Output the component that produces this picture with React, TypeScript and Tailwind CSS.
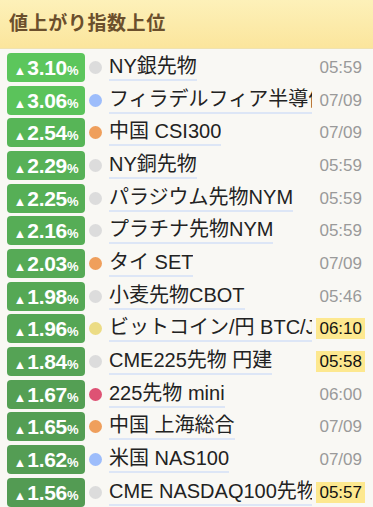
import React from 'react';

type Row = { pct: string; bg: string; dot: string; name: string; time: string; hot?: boolean };

const rows: Row[] = [
  { pct: '3.10', bg: 'bg-[#5cc65c]', dot: 'bg-[#dcdcdc]', name: 'NY銀先物', time: '05:59' },
  { pct: '3.06', bg: 'bg-[#5bc35b]', dot: 'bg-[#9dbdfb]', name: 'フィラデルフィア半導体', time: '07/09' },
  { pct: '2.54', bg: 'bg-[#57b557]', dot: 'bg-[#ef9f5c]', name: '中国 CSI300', time: '07/09' },
  { pct: '2.29', bg: 'bg-[#57b157]', dot: 'bg-[#dcdcdc]', name: 'NY銅先物', time: '05:59' },
  { pct: '2.25', bg: 'bg-[#56af56]', dot: 'bg-[#dcdcdc]', name: 'パラジウム先物NYM', time: '05:59' },
  { pct: '2.16', bg: 'bg-[#56ad56]', dot: 'bg-[#dcdcdc]', name: 'プラチナ先物NYM', time: '05:59' },
  { pct: '2.03', bg: 'bg-[#56aa56]', dot: 'bg-[#ef9f5c]', name: 'タイ SET', time: '07/09' },
  { pct: '1.98', bg: 'bg-[#55a855]', dot: 'bg-[#dcdcdc]', name: '小麦先物CBOT', time: '05:46' },
  { pct: '1.96', bg: 'bg-[#55a655]', dot: 'bg-[#ecdc85]', name: 'ビットコイン/円 BTC/JPY', time: '06:10', hot: true },
  { pct: '1.84', bg: 'bg-[#55a355]', dot: 'bg-[#dcdcdc]', name: 'CME225先物 円建', time: '05:58', hot: true },
  { pct: '1.67', bg: 'bg-[#549f54]', dot: 'bg-[#de5274]', name: '225先物 mini', time: '06:00' },
  { pct: '1.65', bg: 'bg-[#549e54]', dot: 'bg-[#ef9f5c]', name: '中国 上海総合', time: '07/09' },
  { pct: '1.62', bg: 'bg-[#549d54]', dot: 'bg-[#9dbdfb]', name: '米国 NAS100', time: '07/09' },
  { pct: '1.56', bg: 'bg-[#539b53]', dot: 'bg-[#dcdcdc]', name: 'CME NASDAQ100先物', time: '05:57', hot: true },
];

const font = { fontFamily: '"Liberation Sans", "Noto Sans CJK JP", sans-serif' };

export default function App() {
  return (
    <div className="w-[373px] h-[507px] overflow-hidden bg-[#f9f8f4]" style={font}>
      <div className="h-[49px] flex items-center px-[9px] pt-[1px] bg-gradient-to-b from-[#fdf1b9] to-[#fbe59c] border-b border-[#efe2b0]">
        <h2 className="text-[19px] font-bold text-[#6b4f2c] tracking-[0.6px]">値上がり指数上位</h2>
      </div>
      <div className="pt-[2px]">
        {rows.map((r) => (
          <div key={r.pct} className="h-[32.7px] flex items-center pl-[7px] pr-[8px]">
            <div className={`${r.bg} w-[78px] h-[29px] rounded-[4px] flex items-baseline justify-center text-white font-bold shrink-0`}>
              <span className="text-[13px] mr-[1px] leading-[29px]">▲</span>
              <span className="text-[21px] leading-[29px] tracking-[-0.3px]">{r.pct}</span>
              <span className="text-[13px] leading-[29px]">%</span>
            </div>
            <span className={`${r.dot} w-[13px] h-[13px] rounded-full ml-[4px] mr-[7px] shrink-0`} />
            <div className="flex-1 min-w-0 overflow-hidden">
              <span className="inline-block max-w-full overflow-hidden whitespace-nowrap align-bottom text-[20px] leading-[25px] text-[#222] border-b-2 border-[#dde6f6]">
                {r.name}
              </span>
            </div>
            <span
              className={`ml-[4px] shrink-0 text-[17px] leading-[21px] px-[3px] ${r.hot ? 'bg-[#fde88f] text-[#111]' : 'text-[#9a9a9a]'}`}
            >
              {r.time}
            </span>
          </div>
        ))}
      </div>
    </div>
  );
}
